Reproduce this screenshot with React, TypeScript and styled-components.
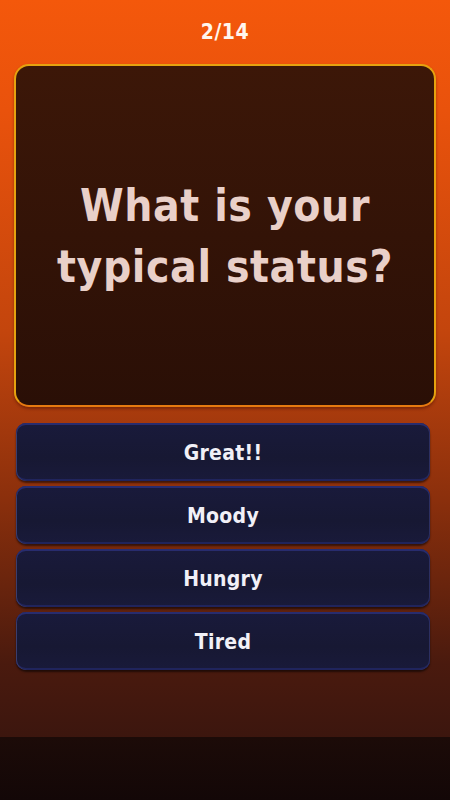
import styled, { createGlobalStyle } from "styled-components";

const options = ["Great!!", "Moody", "Hungry", "Tired"];

export default function App() {
  return (
    <>
      <GlobalStyle />
      <Page>
        <Main>
          <Counter>2/14</Counter>
          <QuestionCard>
            <Question>
              What is your
              <br />
              typical status?
            </Question>
          </QuestionCard>
          <Answers>
            {options.map((o) => (
              <AnswerButton key={o}>{o}</AnswerButton>
            ))}
          </Answers>
        </Main>
        <Footer />
      </Page>
    </>
  );
}

const GlobalStyle = createGlobalStyle`
  * {
    box-sizing: border-box;
  }
  body {
    margin: 0;
    background: #140808;
    font-family: "DejaVu Sans Condensed", "DejaVu Sans", sans-serif;
  }
`;

const Page = styled.div`
  width: 450px;
  height: 800px;
  display: flex;
  flex-direction: column;
  overflow: hidden;
`;

const Main = styled.div`
  flex: 1;
  display: flex;
  flex-direction: column;
  background: linear-gradient(
    180deg,
    #f4580b 0%,
    #e9520c 15%,
    #c3450d 45%,
    #8a2f0c 68%,
    #4a1a0e 90%,
    #3c160e 100%
  );
`;

const Counter = styled.div`
  height: 64px;
  display: flex;
  align-items: center;
  justify-content: center;
  color: #fff6ee;
  font-weight: 700;
  font-size: 21px;
  letter-spacing: 0.5px;
`;

const QuestionCard = styled.div`
  margin: 0 14px;
  height: 343px;
  border-radius: 15px;
  border: 2.5px solid #e5a20f;
  border-bottom-color: #e67a10;
  background: linear-gradient(180deg, #3c1708 0%, #2a0f06 100%);
  display: flex;
  align-items: center;
  justify-content: center;
  box-shadow: 0 2px 3px rgba(60, 10, 0, 0.4);
`;

const Question = styled.h1`
  margin: 0;
  text-align: center;
  color: #e9d0c9;
  font-weight: 700;
  font-size: 44px;
  line-height: 61px;
  letter-spacing: 0.6px;
`;

const Answers = styled.div`
  display: flex;
  flex-direction: column;
  gap: 5px;
  padding: 16px 20px 0 16px;
`;

const AnswerButton = styled.button`
  height: 58px;
  padding-top: 2px;
  border: none;
  border-radius: 10px;
  background: linear-gradient(180deg, #191a3b 0%, #171833 60%, #191a3a 100%);
  box-shadow: inset 0 2px 0 #282c6e, inset 1px 0 0 #3a3d6e, inset -1px 0 0 #2c2f60,
    inset 0 -2px 0 #20245c, 0 2px 2px rgba(0, 0, 0, 0.55);
  color: #f1f0f7;
  font-family: inherit;
  font-weight: 700;
  font-size: 21px;
  letter-spacing: 0.3px;
  cursor: pointer;
`;

const Footer = styled.div`
  height: 63px;
  background: linear-gradient(180deg, #1c0b08 0%, #130707 100%);
`;
